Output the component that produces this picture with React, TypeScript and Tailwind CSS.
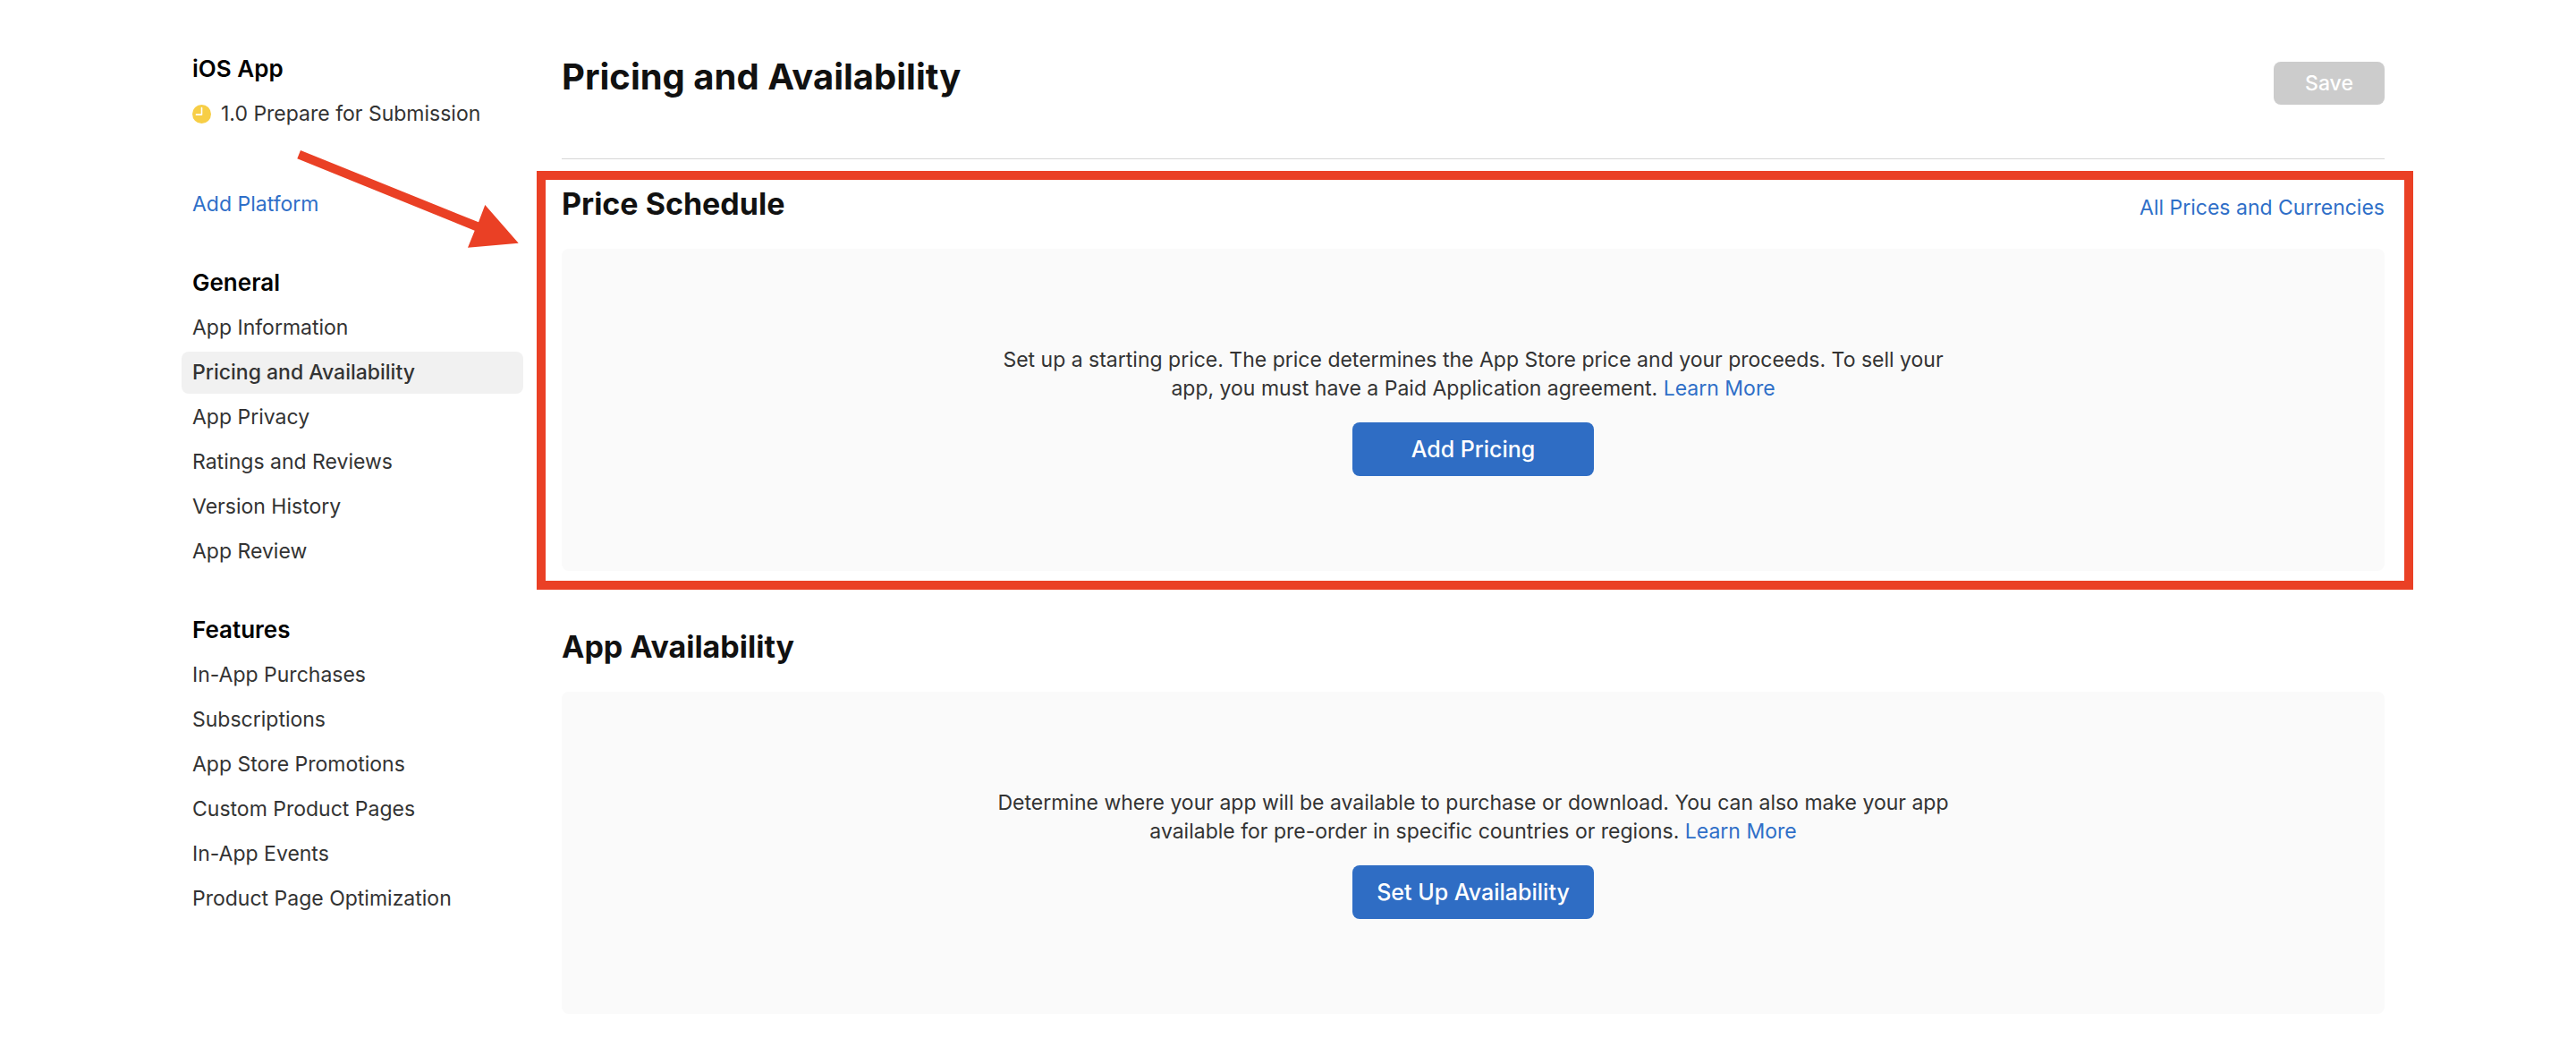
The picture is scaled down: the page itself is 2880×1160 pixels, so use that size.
import type { ReactNode } from 'react';

const generalLinks = [
  'App Information',
  'Pricing and Availability',
  'App Privacy',
  'Ratings and Reviews',
  'Version History',
  'App Review',
];

const featureLinks = [
  'In-App Purchases',
  'Subscriptions',
  'App Store Promotions',
  'Custom Product Pages',
  'In-App Events',
  'Product Page Optimization',
];

const CURRENT = 'Pricing and Availability';

function ClockBadge() {
  return (
    <svg viewBox="0 0 20 20" className="size-[21px] shrink-0" aria-hidden="true">
      <circle cx="10" cy="10" r="10" fill="#f7ce46" />
      <path d="M10 3.4V10.6H4.2" fill="none" stroke="#fff" strokeWidth="1.5" strokeLinecap="round" strokeLinejoin="round" />
    </svg>
  );
}

function NavGroup({ title, links }: { title: string; links: string[] }) {
  return (
    <section>
      <h2 className="mb-[11px] px-3 text-[26px] leading-8 font-semibold text-black">{title}</h2>
      <ul className="flex flex-col gap-[3px]">
        {links.map((label) => (
          <li key={label}>
            <a
              href="#"
              aria-current={label === CURRENT ? 'page' : undefined}
              className="block rounded-lg px-3 leading-[47px] aria-[current=page]:bg-[#f1f1f1] aria-[current=page]:font-medium"
            >
              {label}
            </a>
          </li>
        ))}
      </ul>
    </section>
  );
}

function Sidebar() {
  return (
    <nav aria-label="App" className="flex w-[382px] shrink-0 flex-col gap-12 pt-[61px]">
      <section>
        <h2 className="mb-[11px] px-3 text-[26px] leading-8 font-semibold text-black">iOS App</h2>
        <a href="#" className="flex items-center gap-[11px] px-3 leading-[47px]">
          <ClockBadge />
          1.0 Prepare for Submission
        </a>
        <a href="#" className="mt-[54px] block px-3 leading-[47px] text-[#2f6fc8]">
          Add Platform
        </a>
      </section>
      <NavGroup title="General" links={generalLinks} />
      <NavGroup title="Features" links={featureLinks} />
    </nav>
  );
}

function Highlight() {
  return (
    <>
      <div
        aria-hidden="true"
        className="pointer-events-none absolute -top-[15px] -right-8 -bottom-[21px] -left-7 border-10 border-[#ea4025]"
      />
      <svg
        viewBox="332 168 248 109"
        className="pointer-events-none absolute -top-[38px] right-full mr-12 w-[248px]"
        aria-hidden="true"
      >
        <polygon points="336,168 332.3,177.3 530.7,257.7 523,276.7 579.7,271.7 542.3,229 535,248.3" fill="#ea4025" />
      </svg>
    </>
  );
}

interface CardProps {
  title: string;
  link?: string;
  action: string;
  highlighted?: boolean;
  children: ReactNode;
}

function CardSection({ title, link, action, highlighted, children }: CardProps) {
  return (
    <section className="relative">
      <div className="mb-7 flex items-baseline justify-between">
        <h2 className="text-[34px] leading-11 font-bold text-[#111]">{title}</h2>
        {link && (
          <a href="#" className="leading-8 text-[#2f6fc8]">
            {link}
          </a>
        )}
      </div>
      <div className="flex flex-col items-center gap-[22px] rounded-lg bg-[#fafafa] pt-[108px] pb-[106px]">
        <p className="max-w-[1080px] text-center leading-8">
          {children}{' '}
          <a href="#" className="text-[#2f6fc8]">
            Learn More
          </a>
        </p>
        <button
          type="button"
          className="h-[60px] w-[270px] rounded-lg bg-[#2f6dc4] text-[25px] leading-8 font-medium text-white"
        >
          {action}
        </button>
      </div>
      {highlighted && <Highlight />}
    </section>
  );
}

export default function App() {
  return (
    <div className="flex gap-[43px] bg-white pr-[214px] pb-[27px] pl-[203px] font-['Inter',sans-serif] text-[23px] text-[#333]">
      <Sidebar />
      <main className="min-w-0 flex-1">
        <header className="flex items-start justify-between border-b border-[#d6d6d6] pt-[62px] pb-[67px]">
          <h1 className="text-[40px] leading-12 font-bold text-[#111]">Pricing and Availability</h1>
          <button
            type="button"
            disabled
            className="mt-[7px] -mb-[7px] h-12 w-[124px] rounded-lg bg-[#ccc] leading-8 font-medium text-white"
          >
            Save
          </button>
        </header>
        <div className="flex flex-col gap-[63px] pt-7">
          <CardSection title="Price Schedule" link="All Prices and Currencies" action="Add Pricing" highlighted>
            Set up a starting price. The price determines the App Store price and your proceeds. To sell your app, you
            must have a Paid Application agreement.
          </CardSection>
          <CardSection title="App Availability" action="Set Up Availability">
            Determine where your app will be available to purchase or download. You can also make your app available for
            pre-order in specific countries or regions.
          </CardSection>
        </div>
      </main>
    </div>
  );
}
